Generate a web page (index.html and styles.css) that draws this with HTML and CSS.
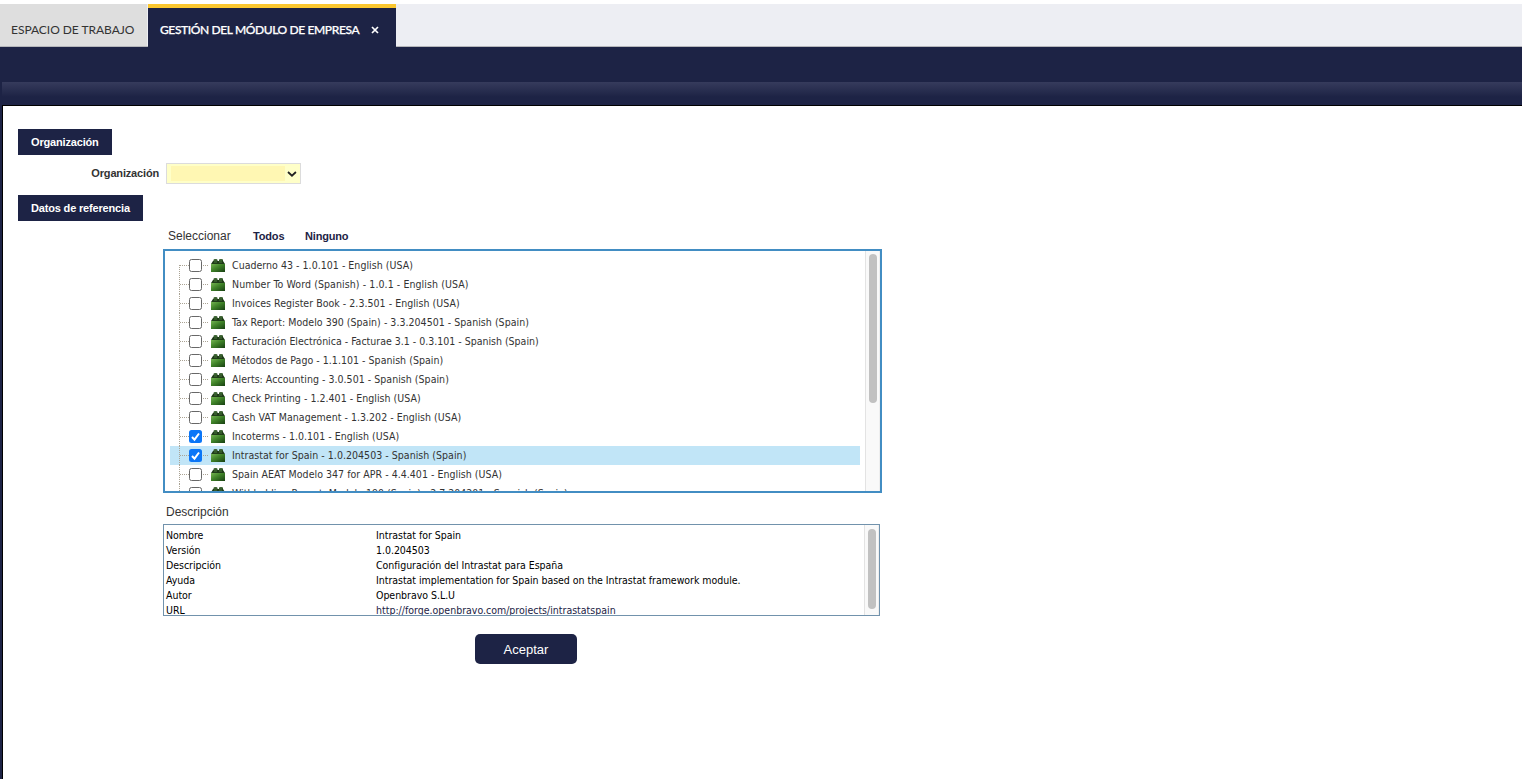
FILE: index.html
```html
<!DOCTYPE html>
<html lang="es">
<head>
<meta charset="utf-8">
<title>Gestión del Módulo de Empresa</title>
<link rel="stylesheet" href="styles.css">
</head>
<body>
<svg width="0" height="0" class="defs" aria-hidden="true">
  <defs>
    <linearGradient id="face" x1="0" y1="0" x2="1" y2="1"><stop offset="0" stop-color="#75b452"/><stop offset=".45" stop-color="#3f8228"/><stop offset="1" stop-color="#173f12"/></linearGradient>
    <symbol id="brick" viewBox="0 0 14 13">
      <path d="M2.5 3V1Q2.5 0 4.500 0T6.500 1V3zM8 3V1Q8 0 10 0T12 1V3z" fill="#23471b"/>
      <path d="M3 1h3M8.500 1h3" stroke="#69925a" stroke-width=".7"/>
      <path d="M2 2h10l2 3H0z" fill="#1f3c18"/>
      <path d="M3 3h3M8 3h3" stroke="#568546" stroke-width=".8"/>
      <path d="M0 5h14v8H0z" fill="url(#face)"/>
    </symbol>
  </defs>
</svg>
<nav class="tabs">
  <div class="tab">ESPACIO DE TRABAJO</div>
  <div class="tab active"><span class="tab-name">GESTIÓN DEL MÓDULO DE EMPRESA</span><svg class="close" viewBox="0 0 8 8"><path d="M1 1l6 6M7 1L1 7" stroke="#fff" stroke-width="1.7"/></svg></div>
</nav>
<div class="toolbar"></div>
<div class="substrip"></div>
<main class="page">
  <h2 class="section">Organización</h2>
  <div class="field"><label>Organización</label><div class="select"><span></span><svg viewBox="0 0 10 6"><path d="M1 1l4 3.700L9 1" fill="none" stroke="#222" stroke-width="1.800"/></svg></div></div>
  <h2 class="section second">Datos de referencia</h2>
  <div class="choose"><span class="lbl">Seleccionar</span><b class="all">Todos</b><b>Ninguno</b></div>
  <div class="tree">
    <div class="rows">
      <div class="row first"><i class="box"></i><i class="dash"></i><svg class="brick"><use href="#brick"/></svg><span>Cuaderno 43 - 1.0.101 - English (USA)</span></div>
      <div class="row"><i class="box"></i><i class="dash"></i><svg class="brick"><use href="#brick"/></svg><span class="wide">Number To Word (Spanish) - 1.0.1 - English (USA)</span></div>
      <div class="row"><i class="box"></i><i class="dash"></i><svg class="brick"><use href="#brick"/></svg><span>Invoices Register Book - 2.3.501 - English (USA)</span></div>
      <div class="row"><i class="box"></i><i class="dash"></i><svg class="brick"><use href="#brick"/></svg><span>Tax Report: Modelo 390 (Spain) - 3.3.204501 - Spanish (Spain)</span></div>
      <div class="row"><i class="box"></i><i class="dash"></i><svg class="brick"><use href="#brick"/></svg><span class="normal">Facturación Electrónica - Facturae 3.1 - 0.3.101 - Spanish (Spain)</span></div>
      <div class="row"><i class="box"></i><i class="dash"></i><svg class="brick"><use href="#brick"/></svg><span>Métodos de Pago - 1.1.101 - Spanish (Spain)</span></div>
      <div class="row"><i class="box"></i><i class="dash"></i><svg class="brick"><use href="#brick"/></svg><span>Alerts: Accounting - 3.0.501 - Spanish (Spain)</span></div>
      <div class="row"><i class="box"></i><i class="dash"></i><svg class="brick"><use href="#brick"/></svg><span>Check Printing - 1.2.401 - English (USA)</span></div>
      <div class="row"><i class="box"></i><i class="dash"></i><svg class="brick"><use href="#brick"/></svg><span>Cash VAT Management - 1.3.202 - English (USA)</span></div>
      <div class="row"><i class="box on"><svg viewBox="0 0 13 13"><path d="M3 7l2.500 2.700L10 3.500" fill="none" stroke="#fff" stroke-width="2"/></svg></i><i class="dash"></i><svg class="brick"><use href="#brick"/></svg><span>Incoterms - 1.0.101 - English (USA)</span></div>
      <div class="row selected"><i class="box on"><svg viewBox="0 0 13 13"><path d="M3 7l2.500 2.700L10 3.500" fill="none" stroke="#fff" stroke-width="2"/></svg></i><i class="dash"></i><svg class="brick"><use href="#brick"/></svg><span>Intrastat for Spain - 1.0.204503 - Spanish (Spain)</span></div>
      <div class="row"><i class="box"></i><i class="dash"></i><svg class="brick"><use href="#brick"/></svg><span>Spain AEAT Modelo 347 for APR - 4.4.401 - English (USA)</span></div>
      <div class="row"><i class="box"></i><i class="dash"></i><svg class="brick"><use href="#brick"/></svg><span class="normal">Withholding Report: Modelo 190 (Spain) - 2.7.204201 - Spanish (Spain)</span></div>
    </div>
    <div class="scroll"><div class="thumb tall"></div></div>
  </div>
  <div class="desc-title">Descripción</div>
  <div class="desc">
    <dl>
      <dt>Nombre</dt><dd>Intrastat for Spain</dd>
      <dt>Versión</dt><dd>1.0.204503</dd>
      <dt>Descripción</dt><dd>Configuración del Intrastat para España</dd>
      <dt>Ayuda</dt><dd>Intrastat implementation for Spain based on the Intrastat framework module.</dd>
      <dt>Autor</dt><dd>Openbravo S.L.U</dd>
      <dt>URL</dt><dd class="link">http://forge.openbravo.com/projects/intrastatspain</dd>
    </dl>
    <div class="scroll"><div class="thumb short"></div></div>
  </div>
  <button class="accept">Aceptar</button>
</main>
</body>
</html>
```
FILE: styles.css
```css
* { box-sizing: border-box; }
html, body { margin: 0; height: 100%; }
body { background: #fff; font-family: "Liberation Sans", sans-serif; color: #333; overflow: hidden; padding-top: 4px; }
.defs { display: block; }
.tabs { display: flex; height: 43px; background: #edeef3; border-bottom: 1px solid #b5b6ba; white-space: nowrap; }
.tab { width: 147px; height: 42px; padding: 8px 0 0 11px; background: #dedede; font: 12px/36px Lato, sans-serif; letter-spacing: -.03px; color: #333; }
.tab.active { display: flex; width: 248px; height: 43px; margin-left: 1px; padding: 4px 0 0 12px; background: #1d2345; border-top: 4px solid #fbc72f; color: #fff; font-weight: 500; letter-spacing: -.38px; -webkit-text-stroke: .25px #fff; }
.tab-name { width: 211px; }
.close { width: 8px; height: 8px; margin-top: 14px; }
.toolbar { height: 35px; background: #1d2345; }
.substrip { height: 23px; border-left: 2px solid #1d2345; background: linear-gradient(#363b5c, #1d2345 65%); }
.page { height: 674px; border-left: 2px solid #1d2345; box-shadow: inset 1px 1px #000; padding: 24px 0 0 16px; display: flex; flex-direction: column; align-items: flex-start; }
.section { flex: none; margin: 0; width: 94px; height: 26px; padding-left: 13px; background: #1d2345; color: #fff; font-size: 11px; line-height: 26px; letter-spacing: -.17px; white-space: nowrap; }
.second { width: 125px; margin-top: 11px; }
.field { flex: none; display: flex; margin-top: 8px; height: 21px; }
.field label { width: 148px; padding-right: 7px; text-align: right; font-size: 11px; font-weight: bold; line-height: 21px; letter-spacing: -.17px; }
.select { display: flex; align-items: center; width: 135px; height: 21px; background: #ffffc8; border: 1px solid #dcdcdc; padding: 2px 3px 2px 4px; }
.select span { width: 115px; height: 15px; background: #fff7b3; }
.select svg { width: 10px; height: 6px; margin-left: 2px; }
.choose { flex: none; display: flex; height: 28px; margin-left: 150px; line-height: 31px; font-size: 11px; letter-spacing: -.17px; color: #1d2345; }
.lbl { width: 85px; font-size: 12px; line-height: 30px; letter-spacing: 0; color: #333; }
.all { width: 52px; }
.tree { flex: none; display: flex; width: 719px; height: 244px; margin-left: 145px; border: 2px solid #428dc3; overflow: hidden; }
.rows { width: 700px; padding: 5px 5px 0; }
.row { display: flex; align-items: center; height: 19px; padding-left: 10px; font: 10.5px/19px "DejaVu Sans Condensed", "DejaVu Sans", sans-serif; font-stretch: condensed; letter-spacing: .035px; white-space: nowrap; background: repeating-linear-gradient(#aaa394 0 1px, transparent 1px 2px) 9px 0 / 1px 19px no-repeat, repeating-linear-gradient(90deg, #aaa394 0 1px, transparent 1px 2px) 10px 9px / 10px 1px no-repeat; }
.row.first { background-position: 9px 9px, 10px 9px; }
.row.selected { background-color: #c1e5f7; }
.wide { letter-spacing: .085px; }
.normal { letter-spacing: 0; }
.box { flex: none; width: 13px; height: 13px; margin-left: 9px; background: #fff; border: 1px solid #686868; border-radius: 2.5px; }
.box.on { border: 0; background: #0b76f7; }
.box svg { display: block; width: 13px; height: 13px; }
.dash { flex: none; width: 6px; height: 1px; margin: 0 3px 0 0; background: repeating-linear-gradient(90deg, transparent 0 1px, #aaa394 1px 2px); }
.brick { flex: none; width: 14px; height: 13px; margin-right: 7px; }
.scroll { flex: none; width: 15px; height: 100%; border-left: 1px solid #e3e3e3; border-right: 1px solid #eee; background: #f9f9f9; padding: 3px 0 0 3px; }
.thumb { width: 8px; border-radius: 4px; background: #c1c1c1; }
.tall { height: 149px; }
.short { height: 80px; margin-top: 1px; }
.desc-title { flex: none; height: 31px; margin-left: 148px; font-size: 12px; line-height: 38px; }
.desc { flex: none; display: flex; width: 717px; height: 92px; margin-left: 145px; border: 1px solid #7192ac; overflow: hidden; color: #000; }
.desc dl { display: grid; grid-template-columns: 210px 1fr; grid-auto-rows: 15px; width: 700px; margin: 0; padding: 3px 0 0 2px; font: 10.5px/15px "DejaVu Sans Condensed", "DejaVu Sans", sans-serif; font-stretch: condensed; letter-spacing: -.03px; white-space: nowrap; }
.desc dd { margin: 0; }
.link { color: #1d2345; text-decoration: underline; letter-spacing: 0; }
.accept { flex: none; width: 102px; height: 30px; margin: 18px 0 0 457px; padding: 1px 0 0; border: 0; border-radius: 5px; background: #1d2345; color: #fff; font: 13px "Liberation Sans", sans-serif; }
```
